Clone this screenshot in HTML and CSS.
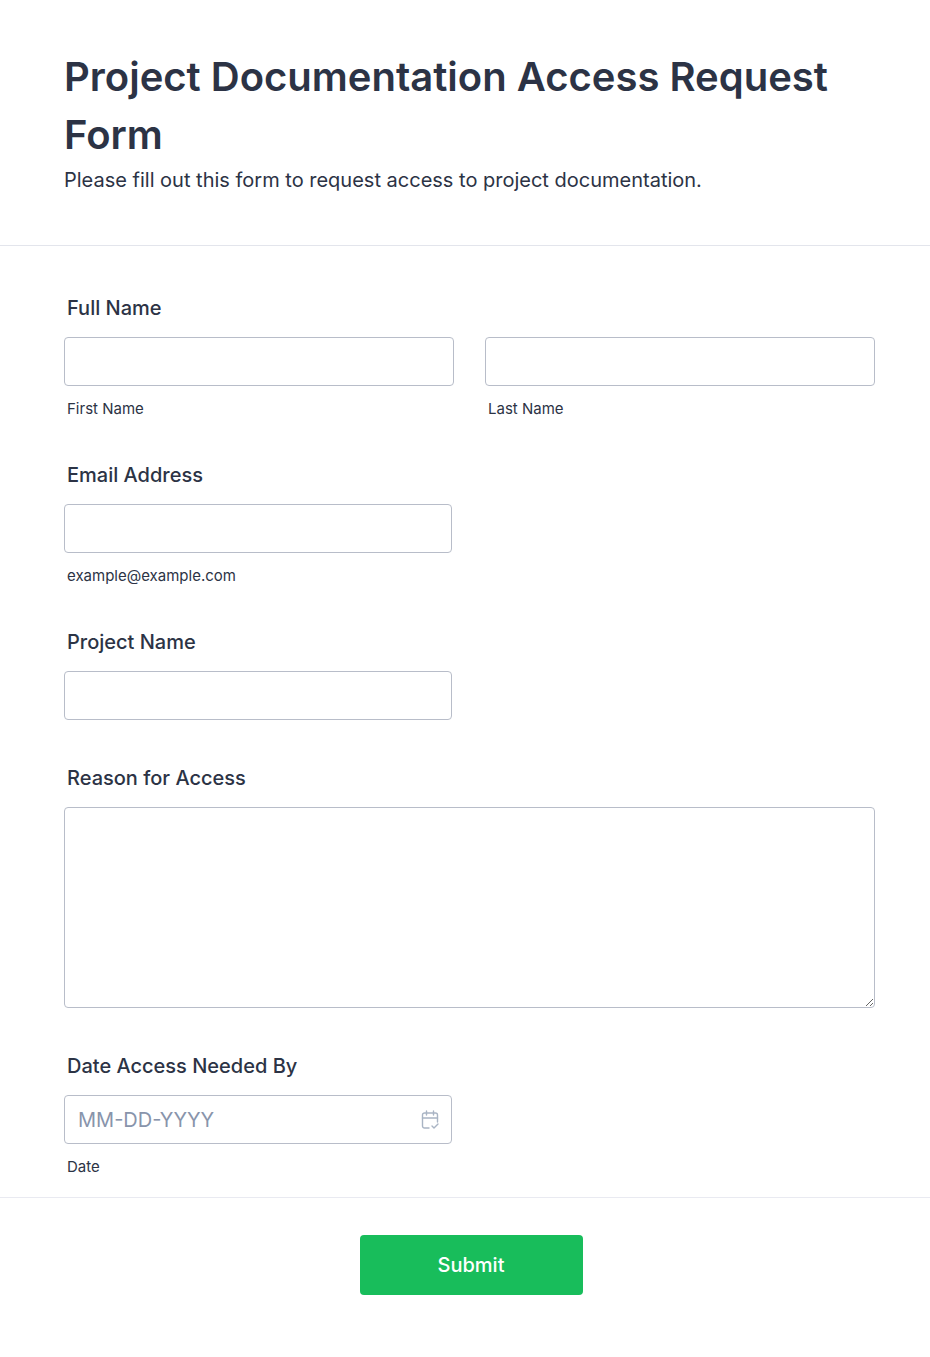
FILE: index.html
```html
<!DOCTYPE html>
<html lang="en">
<head>
<meta charset="utf-8">
<title>Project Documentation Access Request Form</title>
<link rel="stylesheet" href="styles.css">
</head>
<body>
<form class="form">
  <header class="form-header">
    <h1 class="form-title">Project Documentation Access Request Form</h1>
    <p class="form-subtitle">Please fill out this form to request access to project documentation.</p>
  </header>
  <div class="form-body">
    <section class="field field-name">
      <label class="field-label">Full Name</label>
      <div class="name-row">
        <div class="name-col">
          <input class="control" type="text" aria-label="First Name">
          <span class="sublabel">First Name</span>
        </div>
        <div class="name-col">
          <input class="control" type="text" aria-label="Last Name">
          <span class="sublabel">Last Name</span>
        </div>
      </div>
    </section>
    <section class="field field-email">
      <label class="field-label">Email Address</label>
      <input class="control control-half" type="email">
      <span class="sublabel">example@example.com</span>
    </section>
    <section class="field field-project">
      <label class="field-label">Project Name</label>
      <input class="control control-half" type="text">
    </section>
    <section class="field field-reason">
      <label class="field-label">Reason for Access</label>
      <textarea class="control control-area"></textarea>
    </section>
    <section class="field field-date">
      <label class="field-label">Date Access Needed By</label>
      <div class="date-wrap">
        <input class="control control-half control-date" type="text" placeholder="MM-DD-YYYY">
        <svg class="date-icon" width="18" height="20" viewBox="0 0 18 20" fill="none" stroke="#a9b4c4" stroke-width="1.4" stroke-linecap="round" stroke-linejoin="round">
          <path d="M8 18H3.5A2 2 0 0 1 1.500 16V5A2 2 0 0 1 3.500 3H14.500A2 2 0 0 1 16.500 5V12"/>
          <path d="M1.500 8H16.500"/>
          <path d="M5.500 1V5M12.500 1V5"/>
          <path d="M11 16L13 18L17 14"/>
        </svg>
      </div>
      <span class="sublabel">Date</span>
    </section>
  </div>
  <footer class="form-footer">
    <button class="submit" type="button">Submit</button>
  </footer>
</form>
</body>
</html>
```
FILE: styles.css
```css
* { box-sizing: border-box; }
html, body { margin: 0; padding: 0; background: #fff; }
body {
  font-family: Inter, "Liberation Sans", sans-serif;
  color: #2c3345;
}
.form { width: 930px; min-height: 1357px; }
.form-header {
  padding: 48px 64px 53px;
  border-bottom: 1px solid #e3e5ec;
  height: 246px;
}
.form-title {
  margin: 0;
  font-size: 40px;
  line-height: 58px;
  font-weight: 600;
}
.form-subtitle {
  margin: 2px 0 0;
  font-size: 20px;
  line-height: 28px;
  font-weight: 400;
}
.form-body { padding: 50px 55px 0 64px; }
.field { display: flex; flex-direction: column; align-items: flex-start; }
.field-label {
  display: block;
  margin: 0 0 17px 3px;
  font-size: 20px;
  line-height: 24px;
  font-weight: 500;
}
.name-row { display: flex; gap: 31px; width: 100%; }
.name-col { flex: 1; display: flex; flex-direction: column; min-width: 0; }
.control {
  display: block;
  width: 100%;
  height: 49px;
  padding: 0 13px;
  background: #fff;
  border: 1px solid #b8bdc9;
  border-radius: 4px;
  font-family: inherit;
  font-size: 20px;
  color: #2c3345;
  outline: none;
}
.control-half { width: 388px; }
.control-area { height: 201px; padding: 10px 13px; resize: vertical; }
.control-date::placeholder { color: #8894ab; opacity: 1; }
.sublabel {
  display: block;
  margin: 14px 0 0 3px;
  font-size: 15px;
  line-height: 18px;
}
.field-email { margin-top: 45px; }
.field-project { margin-top: 45px; }
.field-reason { margin-top: 46px; }
.field-date { margin-top: 46px; }
.date-wrap { position: relative; width: 388px; }
.date-icon { position: absolute; right: 13px; top: 15px; }
.form-footer {
  margin-top: 21px;
  padding: 37px 0 50px;
  border-top: 1px solid #e9eaf1;
  display: flex;
  justify-content: center;
  padding-left: 12px;
}
.submit {
  width: 223px;
  height: 60px;
  border: 0;
  border-radius: 4px;
  background: #18bd5b;
  color: #fff;
  font-family: inherit;
  font-size: 20px;
  font-weight: 500;
}
```
